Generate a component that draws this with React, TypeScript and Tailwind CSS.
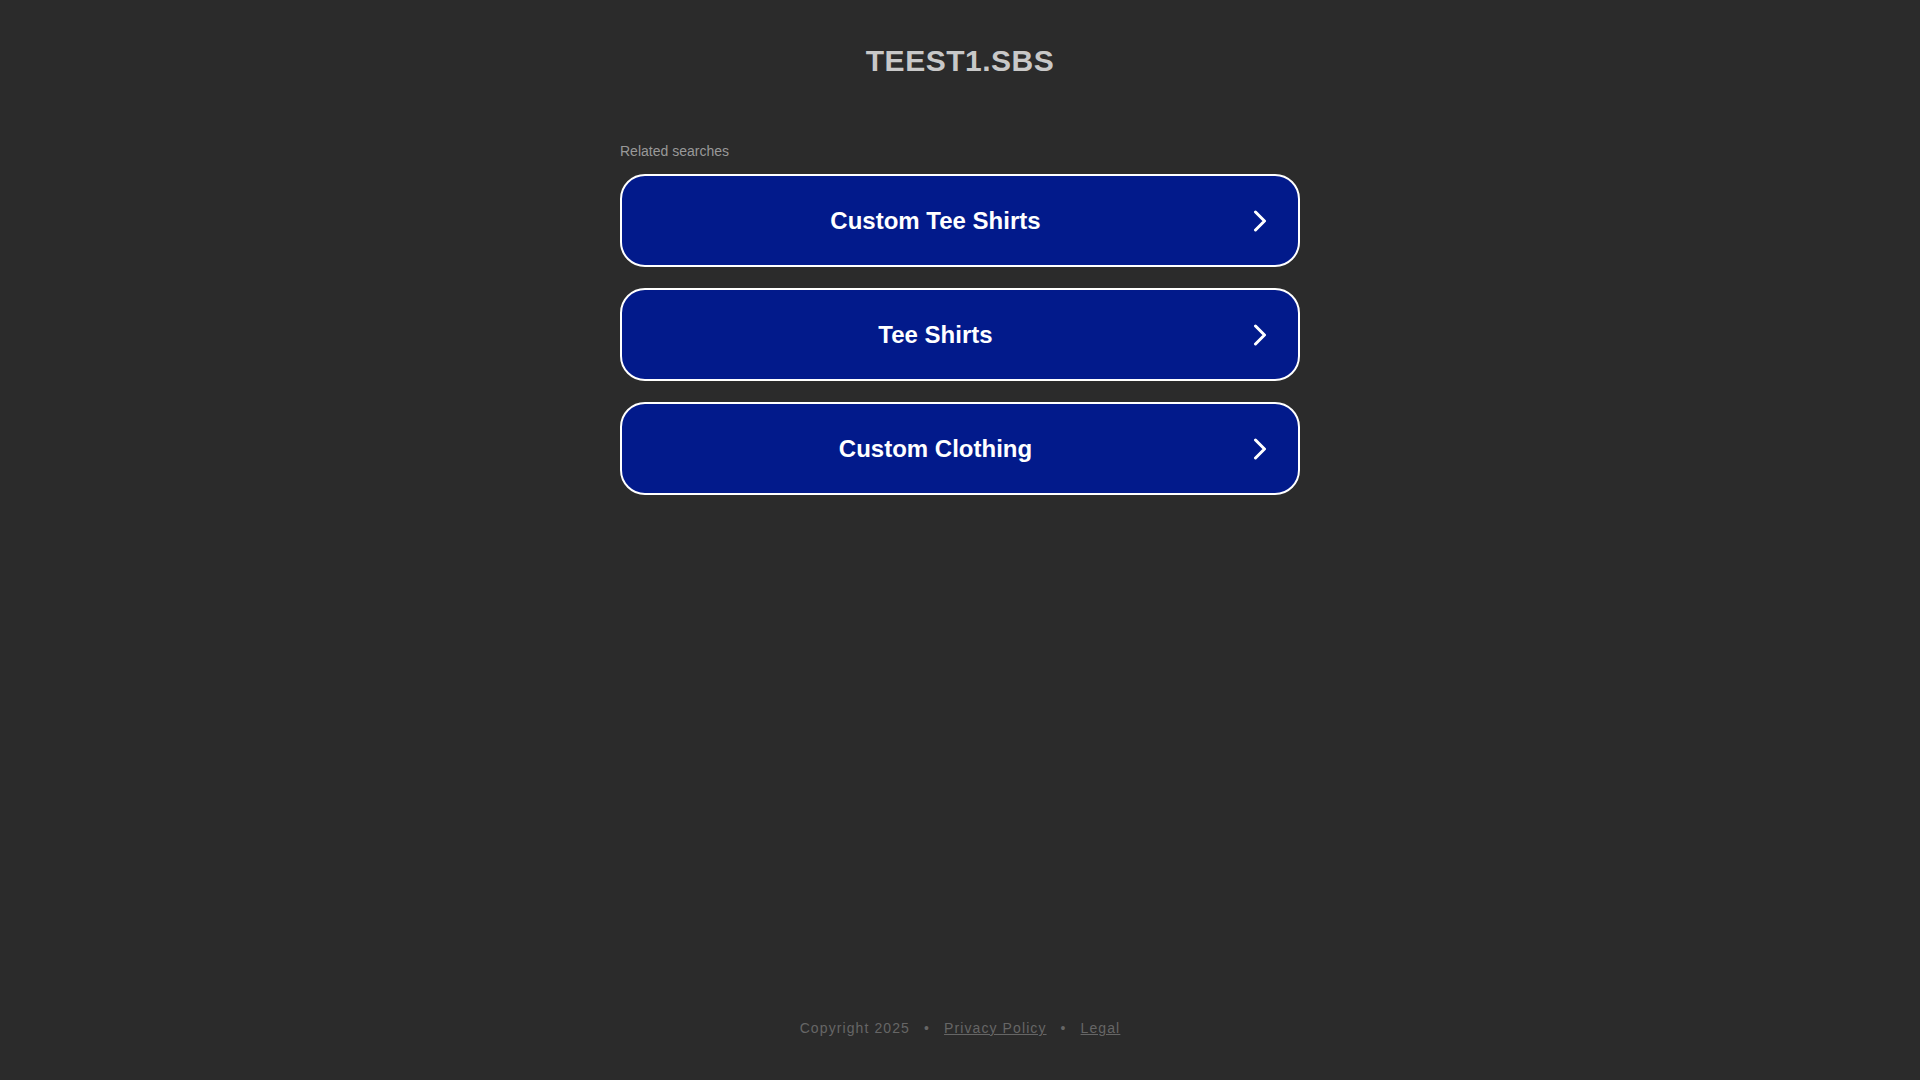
const searches = ["Custom Tee Shirts", "Tee Shirts", "Custom Clothing"];

function Chevron() {
  return (
    <svg width="22" height="22" viewBox="0 0 22 22" fill="none" className="mr-[27px] shrink-0">
      <path d="M6.5 2 L15.5 11 L6.5 20" stroke="white" strokeWidth="3" strokeLinecap="round" strokeLinejoin="round" />
    </svg>
  );
}

export default function App() {
  return (
    <div
      className="flex h-screen flex-col bg-[#2b2b2b]"
      style={{ fontFamily: '"Liberation Sans", Arial, sans-serif' }}
    >
      <main className="flex flex-1 flex-col items-center">
        <h1 className="pt-[43px] text-[30px] font-bold leading-[36px] tracking-[0.5px] text-[#c8c8c8]">
          TEEST1.SBS
        </h1>
        <div className="mt-[64px] w-[680px]">
          <p className="text-[14px] leading-4 text-[#999999]">Related searches</p>
          <div className="mt-[15px] flex flex-col gap-[21px]">
            {searches.map((s) => (
              <a
                key={s}
                href="#"
                className="flex h-[93px] items-center rounded-[25px] border-2 border-white bg-[#021a8b] text-white"
              >
                <span className="flex-1 text-center text-[24px] font-bold">{s}</span>
                <Chevron />
              </a>
            ))}
          </div>
        </div>
      </main>
      <footer className="flex justify-center pb-[42px] text-[14px] leading-5 tracking-[1.1px] text-[#666666]">
        <span>Copyright 2025</span>
        <span className="mx-[14px]">•</span>
        <a href="#" className="underline">Privacy Policy</a>
        <span className="mx-[14px]">•</span>
        <a href="#" className="underline">Legal</a>
      </footer>
    </div>
  );
}
